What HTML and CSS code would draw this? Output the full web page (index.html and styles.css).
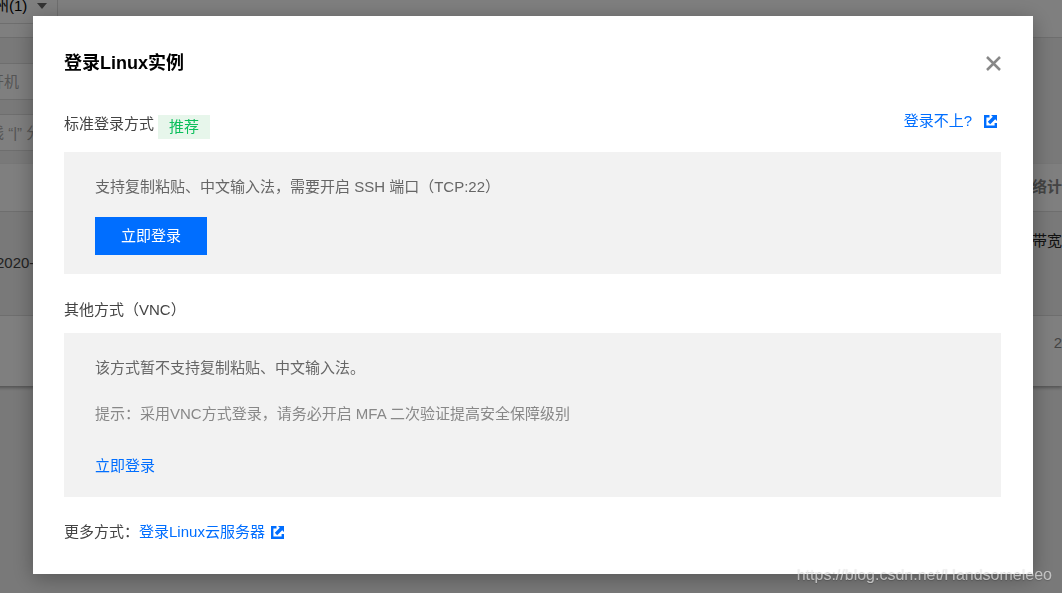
FILE: index.html
```html
<!DOCTYPE html>
<html lang="zh-CN">
<head>
    <meta charset="UTF-8">
    <meta name="viewport" content="width=device-width, initial-scale=1.0">
    <title>登录Linux实例</title>
    <link rel="stylesheet" href="styles.css">
</head>
<body>
    <!-- 控制台页面 -->
    <div class="console">
        <div class="region-bar">
            <button class="region">州(1) <span class="arrow"></span></button>
        </div>
        <div class="toolbar">
            <button class="power-btn" disabled>开机</button>
            <input class="search" type="text" placeholder="线 “|” 分" aria-label="搜索">
        </div>
        <table class="instances">
            <thead>
                <tr>
                    <th></th>
                    <th class="billing">络计-</th>
                </tr>
            </thead>
            <tbody>
                <tr>
                    <td>2020-</td>
                    <td class="billing">带宽-</td>
                </tr>
            </tbody>
            <tfoot>
                <tr>
                    <td></td>
                    <td class="total">2</td>
                </tr>
            </tfoot>
        </table>
    </div>

    <!-- 登录弹窗 -->
    <div class="mask">
        <div class="dialog" role="dialog" aria-labelledby="dialog-title">
            <div class="dialog-header">
                <h2 id="dialog-title">登录Linux实例</h2>
                <button class="close-btn" aria-label="关闭">
                    <svg width="15" height="15" viewBox="0 0 15 15"><path d="M1 1L14 14M14 1L1 14" fill="none" stroke="#888" stroke-width="2.5"/></svg>
                </button>
            </div>

            <div class="method-row">
                <div class="method">
                    <h3>标准登录方式</h3>
                    <span class="tag">推荐</span>
                </div>
                <a class="help" href="#">登录不上?
                    <svg class="jump" viewBox="0 0 13 13"><path d="M5.5 1.2H1.2V11.8H11.8V8" fill="none" stroke="currentColor" stroke-width="2.4"/><path d="M7 0H13V6L11.2 4.2L6.2 9.2L3.8 6.8L8.8 1.8Z" fill="currentColor"/></svg>
                </a>
            </div>
            <div class="panel">
                <p>支持复制粘贴、中文输入法，需要开启 SSH 端口（TCP:22）</p>
                <button class="login-btn">立即登录</button>
            </div>

            <h3 class="other">其他方式（VNC）</h3>
            <div class="panel">
                <p>该方式暂不支持复制粘贴、中文输入法。</p>
                <p class="hint">提示：采用VNC方式登录，请务必开启 MFA 二次验证提高安全保障级别</p>
                <a class="vnc-link" href="#">立即登录</a>
            </div>

            <div class="more">
                <span>更多方式：</span>
                <a href="#">登录Linux云服务器
                    <svg class="jump" viewBox="0 0 13 13"><path d="M5.5 1.2H1.2V11.8H11.8V8" fill="none" stroke="currentColor" stroke-width="2.4"/><path d="M7 0H13V6L11.2 4.2L6.2 9.2L3.8 6.8L8.8 1.8Z" fill="currentColor"/></svg>
                </a>
            </div>
        </div>
    </div>

    <div class="watermark">https://blog.csdn.net/Handsomeleeo</div>
</body>
</html>
```

FILE: styles.css
```css
* {
    box-sizing: border-box;
}
body {
    margin: 0;
    min-height: 100vh;
    background-color: #f2f2f2;
    color: #444;
    font-family: "Liberation Sans", "Noto Sans CJK SC", sans-serif;
    font-size: 15px;
    line-height: 24px;
    overflow: hidden;
}
h2, h3, p {
    margin: 0;
}
h3 {
    font-size: 15px;
    font-weight: normal;
}
button, input {
    font: inherit;
    border-radius: 0;
}
a {
    color: #006eff;
    text-decoration: none;
}

/* 控制台页面 */
.console {
    margin-left: -12px;
}
.region-bar {
    height: 38px;
    background-color: #fff;
    border-bottom: 1px solid #ddd;
}
.region {
    display: flex;
    align-items: center;
    gap: 10px;
    width: 70px;
    height: 24px;
    padding: 0 0 12px 6px;
    background: none;
    border: solid #ddd;
    border-width: 0 1px 1px 0;
    color: #000;
    white-space: nowrap;
}
.arrow {
    border: 5px solid transparent;
    border-top: 6px solid #666;
    border-bottom: 0;
}
.toolbar {
    display: flex;
    flex-direction: column;
    align-items: flex-start;
    gap: 14px;
    padding: 25px 0 13px;
}
.power-btn, .search {
    width: 120px;
    height: 37px;
    padding: 0;
    background-color: #fff;
    border: 1px solid #ddd;
    color: #aaa;
    text-align: left;
}
.search::placeholder {
    color: #aaa;
}
.instances {
    width: 100%;
    background-color: #fff;
    border-collapse: collapse;
    box-shadow: 0 2px 3px rgba(0, 0, 0, 0.3);
}
.instances th, .instances td {
    padding: 0 8px;
    text-align: left;
    white-space: nowrap;
}
.instances th {
    height: 47px;
    border-bottom: 1px solid #ddd;
    color: #888;
}
.instances tbody td {
    height: 104px;
    background-color: #f2f2f2;
    border-bottom: 1px solid #ddd;
}
.instances tfoot td {
    height: 71px;
}
.instances .billing {
    width: 30px;
    max-width: 30px;
    padding: 0;
    overflow: hidden;
}
.instances tbody .billing {
    padding-top: 17px;
    color: #222;
    vertical-align: top;
}
.instances .total {
    padding: 0 0 16px;
    color: #888;
    text-align: right;
}

/* 弹窗 */
.mask {
    position: fixed;
    inset: 0;
    padding: 16px 29px 0 33px;
    background-color: rgba(0, 0, 0, 0.5);
}
.dialog {
    padding: 34px 32px 30px 31px;
    background-color: #fff;
    box-shadow: 0 4px 20px rgba(0, 0, 0, 0.3);
}
.dialog-header {
    display: flex;
    align-items: center;
    justify-content: space-between;
}
.dialog-header h2 {
    color: #000;
    font-size: 18px;
    line-height: 27px;
}
.close-btn {
    display: flex;
    padding: 0;
    background: none;
    border: none;
    cursor: pointer;
}
.method-row {
    display: flex;
    align-items: flex-start;
    justify-content: space-between;
    margin-top: 32px;
    margin-bottom: 13px;
}
.method {
    display: flex;
    gap: 4px;
    height: 30px;
    padding-top: 3px;
}
.tag {
    align-self: flex-end;
    padding: 0 11px;
    background-color: #e7f6eb;
    color: #0abf5b;
}
.help {
    display: flex;
    align-items: center;
    gap: 12px;
    padding-right: 4px;
}
.jump {
    width: 13px;
    height: 13px;
}
.panel {
    padding: 23px 31px 19px;
    background-color: #f2f2f2;
    color: #666;
}
.login-btn {
    display: block;
    height: 38px;
    margin-top: 18px;
    padding: 0 26px;
    background-color: #006eff;
    color: #fff;
    border: none;
    cursor: pointer;
}
.other {
    margin-top: 24px;
    margin-bottom: 11px;
}
.hint {
    margin-top: 22px;
    color: #888;
}
.vnc-link {
    display: inline-block;
    margin-top: 28px;
}
.more {
    display: flex;
    margin-top: 23px;
}
.more a {
    display: flex;
    align-items: center;
    gap: 6px;
}

.watermark {
    position: absolute;
    right: 10px;
    bottom: 6px;
    color: rgba(255, 255, 255, 0.6);
    font-size: 16px;
    text-shadow: 0 1px 1px rgba(0, 0, 0, 0.2);
}
```
